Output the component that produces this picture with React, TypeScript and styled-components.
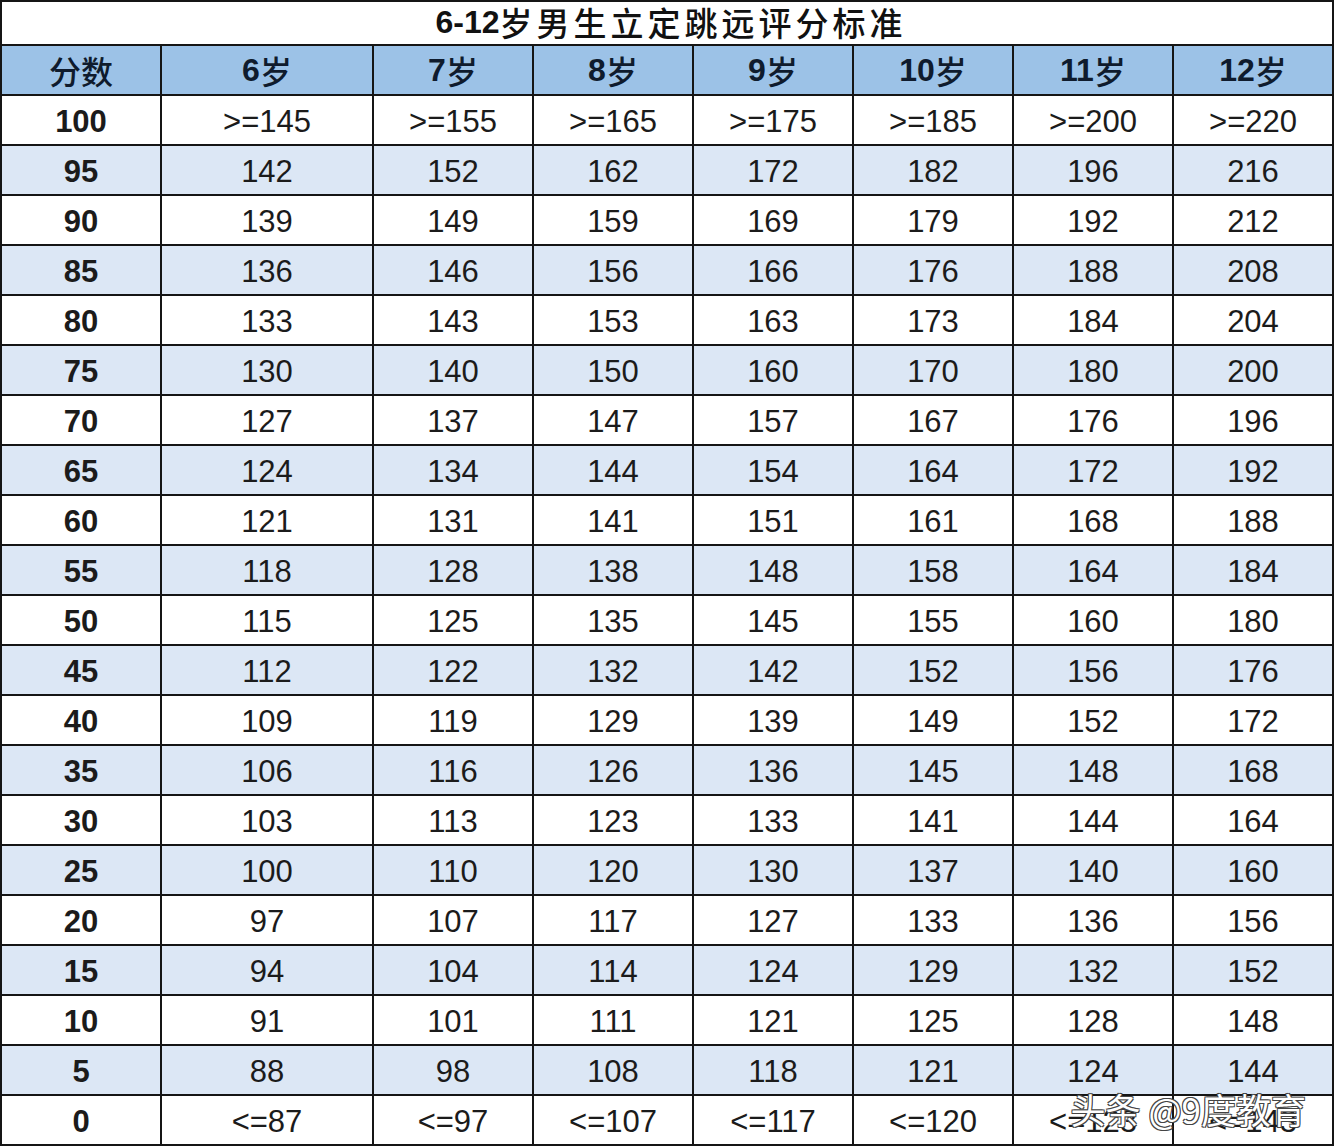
import styled, { createGlobalStyle } from "styled-components";

const GlobalStyle = createGlobalStyle`
  body {
    margin: 0;
    background: #ffffff;
  }
`;

const Sheet = styled.div`
  position: relative;
  width: 1334px;
  display: grid;
  grid-template-columns: 158px 210px repeat(6, 158px);
  grid-template-rows: 42px;
  grid-auto-rows: 48px;
  gap: 2px;
  padding: 2px;
  box-sizing: border-box;
  background: #151515;
  font-family: "Liberation Sans", Arial, "Noto Sans CJK SC", sans-serif;
`;

const Title = styled.div`
  grid-column: 1 / -1;
  background: #ffffff;
  display: flex;
  align-items: center;
  justify-content: center;
  font-size: 32px;
  font-weight: 700;
  color: #111;
  padding-left: 4px;
  padding-bottom: 2px;
`;

const TitleCjk = styled.span`
  font-family: "Noto Sans CJK SC", sans-serif;
  font-weight: 500;
  font-size: 33px;
  letter-spacing: 4px;
  margin-right: -4px;
`;

const Cell = styled.div<{ $tone: "head" | "light" | "white"; $bold?: boolean }>`
  display: flex;
  align-items: center;
  justify-content: center;
  background: ${(p) =>
    p.$tone === "head" ? "#9cc2e7" : p.$tone === "light" ? "#dce7f5" : "#ffffff"};
  color: ${(p) => (p.$tone === "head" ? "#0f1b2d" : "#1b1b1b")};
  font-size: ${(p) => (p.$tone === "head" ? "32px" : "31px")};
  font-weight: ${(p) => (p.$bold ? 700 : 400)};
  padding-top: ${(p) => (p.$tone === "head" ? "0" : "4px")};
  box-sizing: border-box;
`;

const HeadCjk = styled.span`
  font-family: "Noto Sans CJK SC", sans-serif;
  font-weight: 500;
`;

const Watermark = styled.div`
  position: absolute;
  right: 28px;
  bottom: 16px;
  font-family: "Noto Sans CJK SC", sans-serif;
  font-size: 35px;
  line-height: 1.2;
  color: #ffffff;
  text-shadow: -1px -1px 0 #444, 1px -1px 0 #444, -1px 1px 0 #444, 1px 1px 0 #444;
  pointer-events: none;
`;

const ages = ["6", "7", "8", "9", "10", "11", "12"];

const rows: [string, string[]][] = [
  ["100", [">=145", ">=155", ">=165", ">=175", ">=185", ">=200", ">=220"]],
  ["95", ["142", "152", "162", "172", "182", "196", "216"]],
  ["90", ["139", "149", "159", "169", "179", "192", "212"]],
  ["85", ["136", "146", "156", "166", "176", "188", "208"]],
  ["80", ["133", "143", "153", "163", "173", "184", "204"]],
  ["75", ["130", "140", "150", "160", "170", "180", "200"]],
  ["70", ["127", "137", "147", "157", "167", "176", "196"]],
  ["65", ["124", "134", "144", "154", "164", "172", "192"]],
  ["60", ["121", "131", "141", "151", "161", "168", "188"]],
  ["55", ["118", "128", "138", "148", "158", "164", "184"]],
  ["50", ["115", "125", "135", "145", "155", "160", "180"]],
  ["45", ["112", "122", "132", "142", "152", "156", "176"]],
  ["40", ["109", "119", "129", "139", "149", "152", "172"]],
  ["35", ["106", "116", "126", "136", "145", "148", "168"]],
  ["30", ["103", "113", "123", "133", "141", "144", "164"]],
  ["25", ["100", "110", "120", "130", "137", "140", "160"]],
  ["20", ["97", "107", "117", "127", "133", "136", "156"]],
  ["15", ["94", "104", "114", "124", "129", "132", "152"]],
  ["10", ["91", "101", "111", "121", "125", "128", "148"]],
  ["5", ["88", "98", "108", "118", "121", "124", "144"]],
  ["0", ["<=87", "<=97", "<=107", "<=117", "<=120", "<=123", "<=143"]],
];

export default function App() {
  return (
    <>
      <GlobalStyle />
      <Sheet>
        <Title>
          6-12<TitleCjk>岁男生立定跳远评分标准</TitleCjk>
        </Title>
        <Cell $tone="head">
          <HeadCjk>分数</HeadCjk>
        </Cell>
        {ages.map((a) => (
          <Cell key={a} $tone="head" $bold>
            {a}
            <HeadCjk>岁</HeadCjk>
          </Cell>
        ))}
        {rows.map(([score, values], i) => {
          const tone = i % 2 === 1 ? "light" : "white";
          return [
            <Cell key={score} $tone={tone} $bold>
              {score}
            </Cell>,
            ...values.map((v, j) => (
              <Cell key={score + "-" + j} $tone={tone}>
                {v}
              </Cell>
            )),
          ];
        })}
        <Watermark>头条 @9度教育</Watermark>
      </Sheet>
    </>
  );
}
